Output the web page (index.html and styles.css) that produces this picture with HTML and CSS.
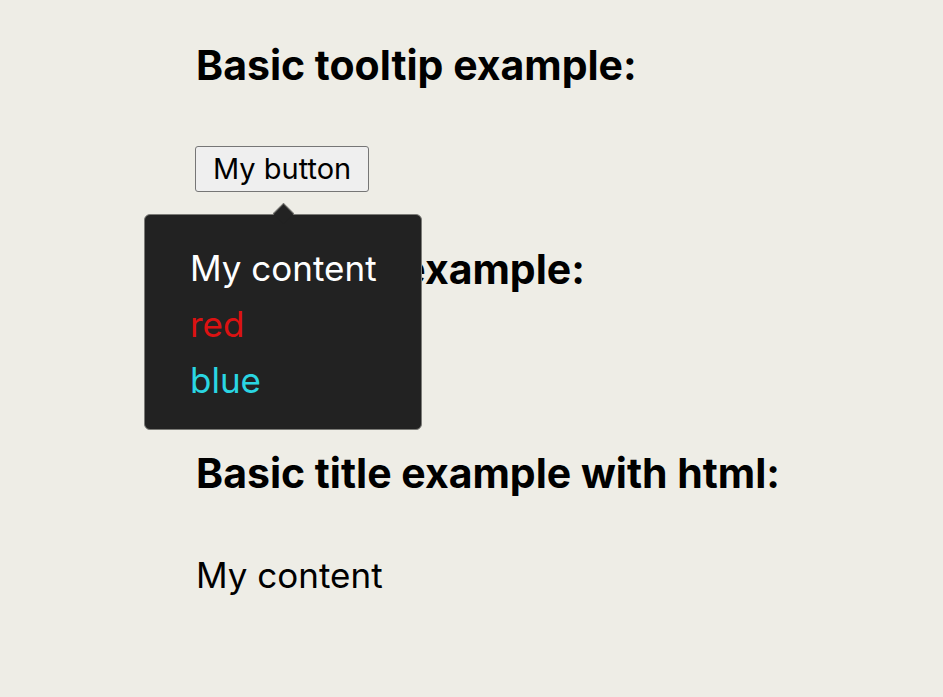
FILE: index.html
```html
<!DOCTYPE html>
<html>
<head>
<meta charset="utf-8">
<link rel="stylesheet" href="styles.css">
</head>
<body>
<main class="page">
  <h2 class="title">Basic tooltip example:</h2>
  <div class="row">
    <div class="anchor">
      <button class="btn">My button</button>
      <div class="tooltip">
        <div class="tip-line white">My content</div>
        <div class="tip-line red">red</div>
        <div class="tip-line blue">blue</div>
      </div>
    </div>
  </div>
  <h2 class="title">Basic title example:</h2>
  <div class="row"></div>
  <h2 class="title">Basic title example with html:</h2>
  <div class="row"><p class="content">My content</p></div>
</main>
</body>
</html>
```

FILE: styles.css
```css
html, body {
  margin: 0;
  padding: 0;
  background: #eeede6;
}
body {
  min-height: 100vh;
  font-family: Inter, "Noto Sans", sans-serif;
  color: #000;
}
.page {
  display: flex;
  flex-direction: column;
  align-items: flex-start;
  gap: 52px;
  padding: 40px 0 0 196px;
}
.title {
  margin: 0;
  font-size: 41px;
  font-weight: 700;
  line-height: 50px;
  height: 50px;
}
.row {
  height: 50px;
  display: flex;
  align-items: center;
}
.anchor {
  position: relative;
  display: inline-block;
  margin-top: 3px;
}
.btn {
  display: block;
  font-family: Inter, "Noto Sans", sans-serif;
  font-size: 29px;
  color: #000;
  background: #efefef;
  border: 1.5px solid #767676;
  border-radius: 3px;
  padding: 6px 17px 6px 17px;
  line-height: 32px;
  margin: 0 0 0 -1px;
}
.tooltip {
  position: absolute;
  left: -52px;
  top: 68px;
  width: 278px;
  height: 216px;
  box-sizing: border-box;
  background: #222222;
  border: 1.5px solid #7b7b77;
  border-radius: 6px;
  padding: 25px 0 0 45px;
}
.tooltip::before {
  content: "";
  position: absolute;
  left: 131px;
  top: -9px;
  width: 14px;
  height: 14px;
  background: #222222;
  border-left: 1.5px solid #7b7b77;
  border-top: 1.5px solid #7b7b77;
  transform: rotate(45deg);
}
.tip-line {
  font-size: 35px;
  line-height: 56px;
  white-space: nowrap;
}
.white { color: #ffffff; }
.red { color: #dc1212; }
.blue { color: #2ad6e2; }
.content {
  margin: 0;
  font-size: 35px;
  line-height: 50px;
}
```
